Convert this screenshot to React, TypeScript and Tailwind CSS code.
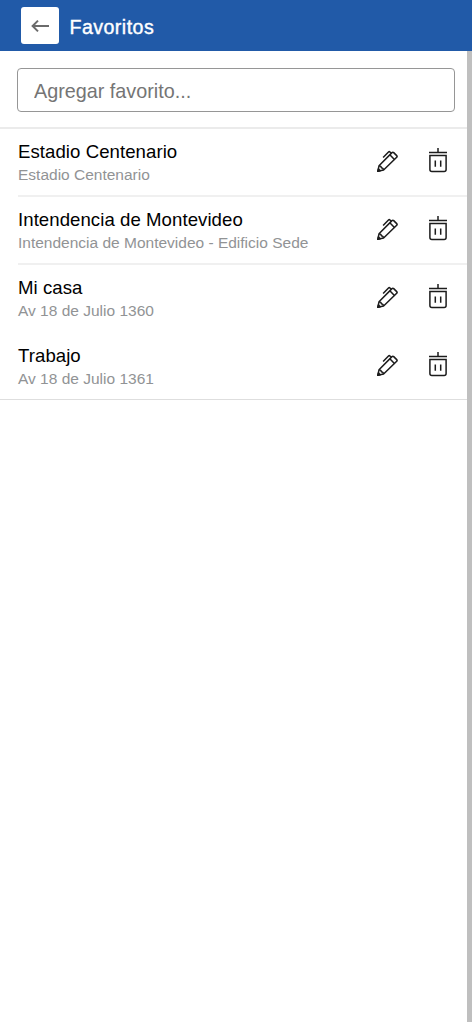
type Favorite = {
  name: string;
  address: string;
};

const favorites: Favorite[] = [
  { name: "Estadio Centenario", address: "Estadio Centenario" },
  {
    name: "Intendencia de Montevideo",
    address: "Intendencia de Montevideo - Edificio Sede",
  },
  { name: "Mi casa", address: "Av 18 de Julio 1360" },
  { name: "Trabajo", address: "Av 18 de Julio 1361" },
];

function BackIcon() {
  return (
    <svg width="20" height="14" viewBox="0 0 20 14" fill="none" stroke="#6b6b6b" strokeWidth="2">
      <path d="M19 7H2.8M8 1.6L2.6 7 8 12.4" />
    </svg>
  );
}

function PencilIcon() {
  return (
    <svg width="24" height="24" viewBox="0 0 24 24" fill="none" stroke="#1c1c1c" strokeWidth="1.5" strokeLinejoin="round">
      <path d="M2.8 22.3L4 16.8 17 3.6c.6-.6 1.1-.6 1.7 0l3 3c.6.6.6 1.1 0 1.7L8.6 21z" />
      <path d="M4 16.8l1.8.6.6 1.4 1.5.6.7 1.6M14.8 5.8l4.9 4.9" />
      <path d="M8.1 8.6L13.5 3c.5-.5 1-.5 1.5 0l1.1 1.2" />
      <path d="M2.8 22.3l.6-2.4 1.8 1.8z" fill="#1c1c1c" />
    </svg>
  );
}

function TrashIcon() {
  return (
    <svg width="20" height="26" viewBox="0 0 20 26" fill="none" stroke="#1c1c1c" strokeWidth="1.5">
      <path d="M10 1v4.5M1 5.5h18" />
      <path d="M1.9 8.5h16.2v14.1a2 2 0 0 1-2 2H3.9a2 2 0 0 1-2-2z" />
      <path d="M7.3 13.4v6.4M12.7 13.4v6.4" />
    </svg>
  );
}

function FavoriteRow({ favorite }: { favorite: Favorite }) {
  return (
    <li className="group pl-[18px]">
      <div className="flex h-[68px] items-start justify-between border-b-2 border-[#f0f0f0] pr-6 group-nth-3:h-[67.5px] group-nth-3:border-transparent group-last:h-[66.5px] group-last:border-transparent">
        <div className="pt-[11px]">
          <h2 className="mb-px text-[18.6px] leading-[23px] tracking-[0.06px] text-black">{favorite.name}</h2>
          <p className="text-[15.5px] leading-[22px] text-[#919395]">{favorite.address}</p>
        </div>

        <div className="flex items-center gap-[29px] pt-[18px]">
          <button type="button" aria-label="Editar">
            <PencilIcon />
          </button>
          <button type="button" aria-label="Eliminar" className="mb-0.5">
            <TrashIcon />
          </button>
        </div>
      </div>
    </li>
  );
}

export default function App() {
  return (
    <div className="relative h-screen overflow-hidden bg-white font-['Liberation_Sans',Arial,sans-serif]">
      <header className="flex h-[51px] items-center bg-[#215aa8] pl-[21px]">
        <button
          type="button"
          aria-label="Volver"
          className="flex size-[37.5px] items-center justify-center rounded-[3px] bg-white"
        >
          <BackIcon />
        </button>
        <h1 className="ml-[11px] pt-[5px] text-[19.6px] tracking-[0.45px] text-white [-webkit-text-stroke:0.4px_white]">
          Favoritos
        </h1>
      </header>

      <div className="h-[78px] border-b-2 border-[#ebebeb] pt-[17px] pr-[17px] pl-[16.5px]">
        <input
          type="text"
          placeholder="Agregar favorito..."
          className="block h-11 w-full rounded-[4px] border border-[#969696] pt-[3px] pl-[16.5px] text-[19.8px] outline-none placeholder:text-[#757575]"
        />
      </div>

      <ul className="border-b border-[#dedede]">
        {favorites.map((favorite) => (
          <FavoriteRow key={favorite.name} favorite={favorite} />
        ))}
      </ul>

      {/* scrollbar */}
      <div className="absolute top-[51px] right-0 bottom-[2px] w-[5px] bg-[#bfbfbf]" />
    </div>
  );
}
